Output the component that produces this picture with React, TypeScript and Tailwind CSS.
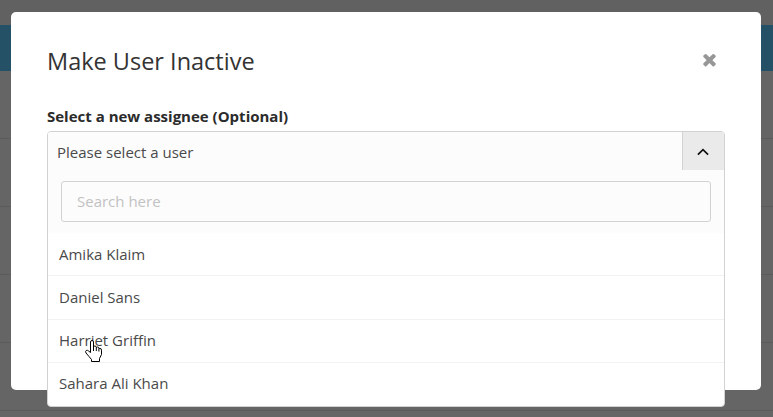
const users = ["Amika Klaim", "Daniel Sans", "Harriet Griffin", "Sahara Ali Khan"];

function CloseIcon() {
  return (
    <svg viewBox="0 0 1792 1792" className="h-[19px] w-[19px] fill-[#979797]" aria-hidden="true">
      <path d="M1490 1322q0 40-28 68l-136 136q-28 28-68 28t-68-28l-294-294-294 294q-28 28-68 28t-68-28l-136-136q-28-28-28-68t28-68l294-294-294-294q-28-28-28-68t28-68l136-136q28-28 68-28t68 28l294 294 294-294q28-28 68-28t68 28l136 136q28 28 28 68t-28 68l-294 294 294 294q28 28 28 68z" />
    </svg>
  );
}

function ChevronUp() {
  return (
    <svg viewBox="0 0 12 8" className="h-2 w-3" fill="none" stroke="#111" strokeWidth="1.7" aria-hidden="true">
      <path d="M0.9 6.7 6 1.7l5.1 5" />
    </svg>
  );
}

function HandCursor() {
  return (
    <svg
      viewBox="0 0 17 22"
      className="pointer-events-none absolute top-[20px] left-[37px] h-[22px] w-[17px]"
      fill="#fff"
      stroke="#000"
      strokeWidth="1"
      strokeLinejoin="round"
      aria-hidden="true"
    >
      <path d="M5.5 12.5V2q0-1.5 1.5-1.5T8.5 2v5q0-1 1.3-1 1.5 0 1.5 1.3v.5q.2-.8 1.3-.8 1.3 0 1.3 1.3v.7q.2-.6 1.1-.6 1.5 0 1.5 1.8v4.3l-2 4v3H6.5v-2L4 16.5 1 13q-1-1.8.2-2.5 1.3-.6 2.3.5z" />
      <path d="M8.5 7v4M11.3 8v3M13.9 9v2.5" fill="none" />
    </svg>
  );
}

function Backdrop() {
  return (
    <div className="flex h-full flex-col bg-[#656565]">
      <div className="h-[25px] shrink-0 bg-[#616161]" />
      <div className="h-[46px] shrink-0 bg-[#245166]" />
      {[0, 1, 2, 3, 4].map((row) => (
        <div key={row} className="h-[68px] shrink-0 border-b border-[#5b5b5b]" />
      ))}
    </div>
  );
}

function UserSelect() {
  return (
    <div className="h-[276px] w-[678px] overflow-hidden rounded-[4px] border border-[#d2d2d2] bg-white text-[15px] font-normal text-[#4a4a4a]">
      <div className="bg-[#fcfcfc]">
        <div className="flex h-[38px] items-stretch justify-between">
          <div className="flex items-center pb-[2px] pl-[9px] pt-[5px]">Please select a user</div>
          <button className="flex w-[42px] items-center justify-center border-l border-[#d2d2d2] bg-[#eaeaea] pr-px pt-[2px]">
            <ChevronUp />
          </button>
        </div>
        <div className="px-[13px] pb-[11px] pt-[11px]">
          <input
            placeholder="Search here"
            className="block h-[41px] w-full rounded-[3px] border border-[#d2d2d2] bg-[#fcfcfc] px-[15px] pb-[2px] outline-none placeholder:text-[#c2c2c2]"
          />
        </div>
      </div>
      <ul>
        {users.map((user) => (
          <li
            key={user}
            className="relative flex h-[43.3px] items-center border-b border-[#f2f2f2] pl-[11px] last:border-b-0 last:pb-[2px]"
          >
            {user}
            {user === "Harriet Griffin" && <HandCursor />}
          </li>
        ))}
      </ul>
    </div>
  );
}

export default function App() {
  return (
    <div className="relative h-[417px] w-[773px] overflow-hidden font-['Open_Sans','Noto_Sans',sans-serif]">
      <Backdrop />
      <div className="absolute left-[11px] top-[12px] h-[378px] w-[750px] rounded-[5px] bg-white px-9 pt-[33px]">
        <header className="flex h-8 items-center justify-between pr-[6px]">
          <h1 className="text-[23.5px] leading-8 text-[#333]">Make User Inactive</h1>
          <button aria-label="Close" className="-mt-1">
            <CloseIcon />
          </button>
        </header>
        <label className="mb-[5px] mt-[29px] block text-[15px] font-bold leading-5 text-[#2b2b2b]">
          Select a new assignee (Optional)
        </label>
        <UserSelect />
      </div>
    </div>
  );
}
